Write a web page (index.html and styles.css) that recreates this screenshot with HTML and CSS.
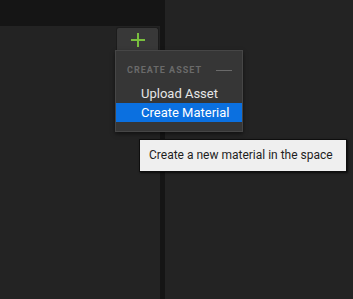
FILE: index.html
```html
<!DOCTYPE html>
<html lang="en">
<head>
    <meta charset="UTF-8">
    <title>Create Asset</title>
    <link rel="stylesheet" href="styles.css">
</head>
<body>

    <div class="workspace">
        <section class="left-pane">
            <div class="toolbar"></div>
            <div class="pane-body"></div>
        </section>
        <div class="divider"></div>
        <section class="right-pane"></section>
    </div>

    <button class="add-button" title="Add">
        <svg width="16" height="16" viewBox="0 0 16 16">
            <path d="M7 1h2v14H7zM1 7h14v2H1z" fill="#79bf3e"/>
        </svg>
    </button>

    <div class="asset-menu">
        <div class="menu-header">
            <span>CREATE ASSET</span>
            <span class="header-line"></span>
        </div>
        <div class="menu-item">Upload Asset</div>
        <div class="menu-item active">Create Material</div>
    </div>

    <div class="tooltip">Create a new material in the space</div>

</body>
</html>
```

FILE: styles.css
```css
body {
    margin: 0;
    font-family: Roboto, "Liberation Sans", sans-serif;
    background-color: #232323;
    width: 353px;
    height: 299px;
    overflow: hidden;
    position: relative;
}
.workspace {
    display: flex;
    height: 299px;
}
.left-pane {
    width: 160px;
    display: flex;
    flex-direction: column;
}
.toolbar {
    height: 26px;
    background-color: #151515;
}
.pane-body {
    flex: 1;
    background-color: #232323;
}
.divider {
    width: 5px;
    background-color: #151515;
}
.right-pane {
    flex: 1;
    background-color: #232323;
}
.add-button {
    position: absolute;
    left: 116px;
    top: 27px;
    width: 43px;
    height: 24px;
    padding: 0;
    background-color: #383838;
    border: 1px solid #1c1c1c;
    border-bottom: none;
    border-radius: 3px 3px 0 0;
    display: flex;
    align-items: center;
    justify-content: center;
}
.asset-menu {
    position: absolute;
    left: 115px;
    top: 50px;
    width: 126px;
    padding: 12px 0 9px;
    background-color: #363636;
    border: 1px solid #464646;
    box-shadow: 0 2px 4px rgba(0, 0, 0, 0.5);
}
.menu-header {
    display: flex;
    align-items: center;
    padding: 0 10px 0 11px;
    height: 14px;
    font-size: 9px;
    font-weight: bold;
    letter-spacing: 1px;
    color: #6a6a6a;
}
.menu-header span:first-child {
    flex: 1;
}
.header-line {
    width: 16px;
    height: 1px;
    background-color: #6a6a6a;
}
.menu-item {
    height: 19px;
    line-height: 19px;
    padding-left: 25px;
    font-size: 13px;
    color: #e6e6e6;
}
.menu-header + .menu-item {
    margin-top: 7px;
}
.menu-item.active {
    background-color: #0b70e0;
    color: #ffffff;
}
.tooltip {
    position: absolute;
    left: 139px;
    top: 139px;
    width: 188px;
    height: 31px;
    padding: 0 9px;
    line-height: 31px;
    background-color: #efefef;
    border: 1px solid #0e0e0e;
    box-shadow: 1px 1px 2px rgba(0, 0, 0, 0.7);
    font-size: 12px;
    color: #1e1e1e;
    white-space: nowrap;
}
```
